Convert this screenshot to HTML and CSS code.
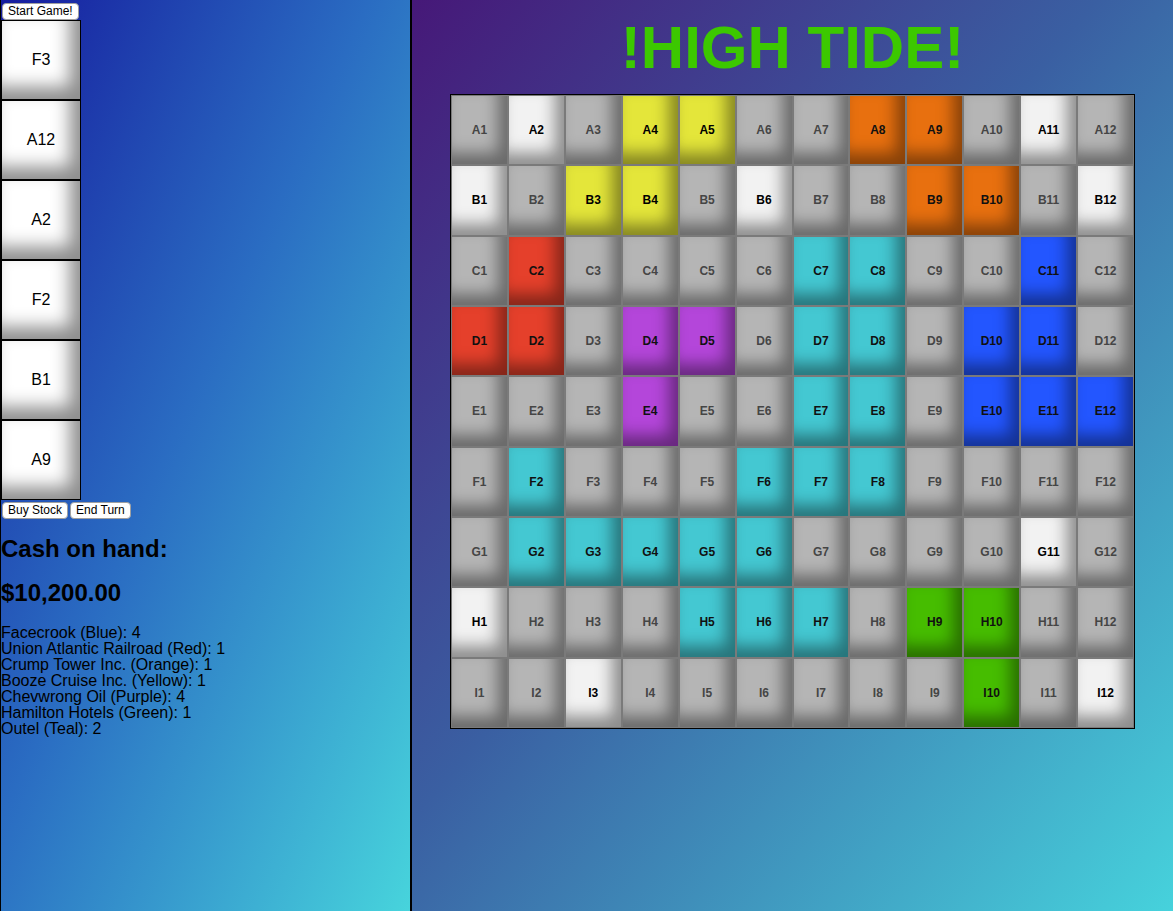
FILE: index.html
```html
<!DOCTYPE html>
<html>
<head>
<meta charset="utf-8">
<title>High Tide</title>
<link rel="stylesheet" href="styles.css">
</head>
<body>
<div class="player">
  <div class="top-bar"><button class="btn">Start Game!</button></div>
  <div class="hand">
    <div class="tile">F3</div>
    <div class="tile">A12</div>
    <div class="tile">A2</div>
    <div class="tile">F2</div>
    <div class="tile">B1</div>
    <div class="tile">A9</div>
  </div>
  <div class="actions"><button class="btn">Buy Stock</button><button class="btn">End Turn</button></div>
  <h2 class="cash">Cash on hand:</h2>
  <h2 class="cash">$10,200.00</h2>
  <div class="stocks">
    <div>Facecrook (Blue): 4</div>
    <div>Union Atlantic Railroad (Red): 1</div>
    <div>Crump Tower Inc. (Orange): 1</div>
    <div>Booze Cruise Inc. (Yellow): 1</div>
    <div>Chevwrong Oil (Purple): 4</div>
    <div>Hamilton Hotels (Green): 1</div>
    <div>Outel (Teal): 2</div>
  </div>
</div>
<div class="game">
  <h1 class="title">!HIGH TIDE!</h1>
  <div class="board">
    <div class="cell">A1</div><div class="cell w">A2</div><div class="cell">A3</div><div class="cell y">A4</div><div class="cell y">A5</div><div class="cell">A6</div><div class="cell">A7</div><div class="cell o">A8</div><div class="cell o">A9</div><div class="cell">A10</div><div class="cell w">A11</div><div class="cell">A12</div>
    <div class="cell w">B1</div><div class="cell">B2</div><div class="cell y">B3</div><div class="cell y">B4</div><div class="cell">B5</div><div class="cell w">B6</div><div class="cell">B7</div><div class="cell">B8</div><div class="cell o">B9</div><div class="cell o">B10</div><div class="cell">B11</div><div class="cell w">B12</div>
    <div class="cell">C1</div><div class="cell r">C2</div><div class="cell">C3</div><div class="cell">C4</div><div class="cell">C5</div><div class="cell">C6</div><div class="cell t">C7</div><div class="cell t">C8</div><div class="cell">C9</div><div class="cell">C10</div><div class="cell b">C11</div><div class="cell">C12</div>
    <div class="cell r">D1</div><div class="cell r">D2</div><div class="cell">D3</div><div class="cell p">D4</div><div class="cell p">D5</div><div class="cell">D6</div><div class="cell t">D7</div><div class="cell t">D8</div><div class="cell">D9</div><div class="cell b">D10</div><div class="cell b">D11</div><div class="cell">D12</div>
    <div class="cell">E1</div><div class="cell">E2</div><div class="cell">E3</div><div class="cell p">E4</div><div class="cell">E5</div><div class="cell">E6</div><div class="cell t">E7</div><div class="cell t">E8</div><div class="cell">E9</div><div class="cell b">E10</div><div class="cell b">E11</div><div class="cell b">E12</div>
    <div class="cell">F1</div><div class="cell t">F2</div><div class="cell">F3</div><div class="cell">F4</div><div class="cell">F5</div><div class="cell t">F6</div><div class="cell t">F7</div><div class="cell t">F8</div><div class="cell">F9</div><div class="cell">F10</div><div class="cell">F11</div><div class="cell">F12</div>
    <div class="cell">G1</div><div class="cell t">G2</div><div class="cell t">G3</div><div class="cell t">G4</div><div class="cell t">G5</div><div class="cell t">G6</div><div class="cell">G7</div><div class="cell">G8</div><div class="cell">G9</div><div class="cell">G10</div><div class="cell w">G11</div><div class="cell">G12</div>
    <div class="cell w">H1</div><div class="cell">H2</div><div class="cell">H3</div><div class="cell">H4</div><div class="cell t">H5</div><div class="cell t">H6</div><div class="cell t">H7</div><div class="cell">H8</div><div class="cell g">H9</div><div class="cell g">H10</div><div class="cell">H11</div><div class="cell">H12</div>
    <div class="cell">I1</div><div class="cell">I2</div><div class="cell w">I3</div><div class="cell">I4</div><div class="cell">I5</div><div class="cell">I6</div><div class="cell">I7</div><div class="cell">I8</div><div class="cell">I9</div><div class="cell g">I10</div><div class="cell">I11</div><div class="cell w">I12</div>
  </div>
</div>
</body>
</html>
```
FILE: styles.css
```css
html, body {
  margin: 0;
  padding: 0;
  height: 100%;
}
body {
  display: flex;
  font-family: "Liberation Sans", Arial, sans-serif;
  color: #000;
  overflow: hidden;
}
.player {
  width: 409px;
  flex: none;
  border-left: 1px solid #000;
  border-right: 2px solid #000;
  background: linear-gradient(to bottom right, #161c9e 0%, #2a6cc2 45%, #47d4dc 100%);
}
.top-bar {
  padding: 3px 0 0 1px;
  height: 17px;
}
.btn {
  display: inline-block;
  font-family: "Liberation Sans", Arial, sans-serif;
  font-size: 12px;
  line-height: 15px;
  height: 17px;
  padding: 0 5px;
  margin: 0;
  border: 1px solid #a0a0a0;
  border-radius: 4px;
  background: #fff;
  color: #000;
  vertical-align: top;
}
.hand {
  display: flex;
  flex-direction: column;
}
.tile {
  box-sizing: border-box;
  width: 80px;
  height: 80px;
  border: 1px solid #000;
  background: #fff;
  box-shadow: inset -10px -12px 18px rgba(0, 0, 0, 0.45);
  display: flex;
  align-items: center;
  justify-content: center;
  font-size: 16px;
}
.actions {
  display: flex;
  gap: 2px;
  padding: 2px 0 0 1px;
}
.cash {
  font-size: 24px;
  line-height: 28px;
  font-weight: bold;
  margin: 16px 0;
}
.stocks {
  margin-top: 18px;
  font-size: 16px;
  line-height: 16px;
}
.game {
  flex: 1;
  background: linear-gradient(to bottom right, #461878 0%, #3a5fa2 45%, #46d2dc 100%);
}
.title {
  margin: 13px 0 12px;
  text-align: center;
  font-size: 60px;
  line-height: 69px;
  font-weight: bold;
  color: #3cc800;
}
.board {
  width: 681px;
  height: 631px;
  margin: 0 auto;
  border: 1px solid #000;
  padding: 1px;
  background: #7a7a7a;
  display: grid;
  grid-template-columns: repeat(12, 1fr);
  grid-template-rows: repeat(9, 1fr);
  gap: 2px;
}
.cell {
  background: #b5b5b5;
  box-shadow: inset -9px -11px 16px rgba(0, 0, 0, 0.42);
  display: flex;
  align-items: center;
  justify-content: center;
  font-size: 12px;
  font-weight: bold;
  color: #454545;
}
.cell.w { background: #f2f2f2; color: #000; }
.cell.y { background: #e4e63a; color: #000; }
.cell.o { background: #e8700f; color: #111; }
.cell.r { background: #e5402b; color: #111; }
.cell.t { background: #44c8d2; color: #111; }
.cell.b { background: #2356ff; color: #111; }
.cell.p { background: #b446da; color: #111; }
.cell.g { background: #46bd00; color: #111; }
```
